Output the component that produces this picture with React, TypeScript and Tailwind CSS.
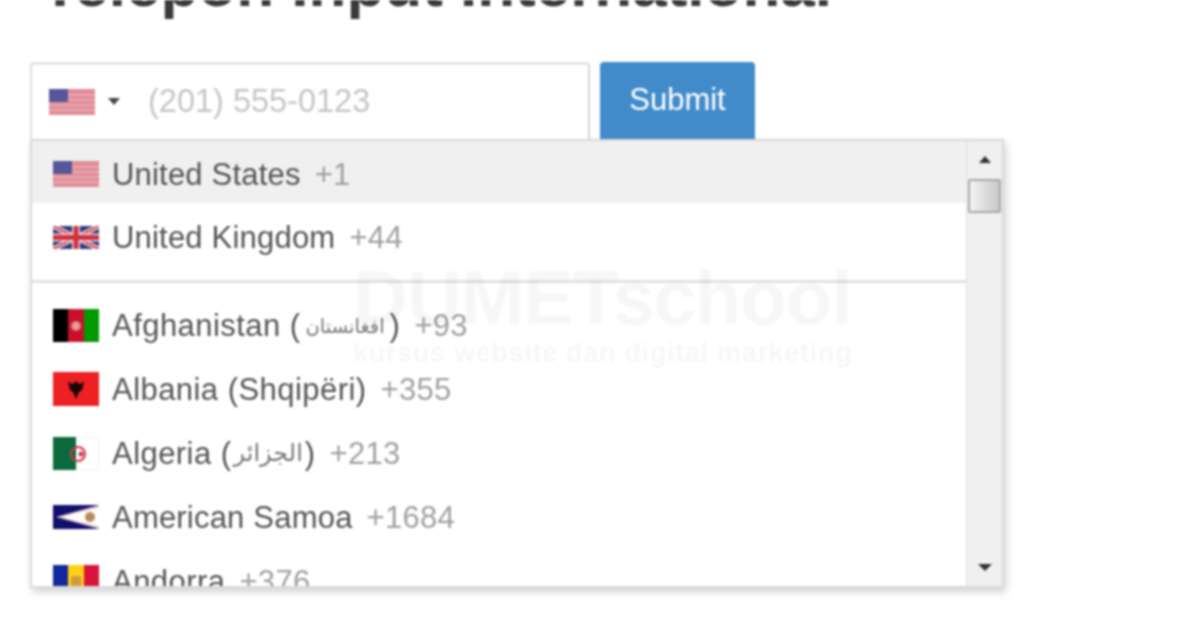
import React from "react";

const UsFlag = () => (
  <svg width="46" height="26" viewBox="0 0 46 26" className="shrink-0">
    <rect width="46" height="26" fill="#e08d97" />
    <rect y="5" width="46" height="2" fill="#e9a8af" />
    <rect y="10" width="46" height="2" fill="#e9a8af" />
    <rect y="15" width="46" height="2" fill="#e9a8af" />
    <rect y="20" width="46" height="2" fill="#e9a8af" />
    <rect width="19" height="13" fill="#56569a" />
  </svg>
);

const UkFlag = () => (
  <svg width="46" height="23" viewBox="0 0 46 23" className="shrink-0">
    <rect width="46" height="23" fill="#2d3a80" />
    <path d="M0 0L46 23M46 0L0 23" stroke="#f3d5d8" strokeWidth="5" />
    <path d="M0 0L46 23M46 0L0 23" stroke="#d0404f" strokeWidth="2" />
    <path d="M23 0V23M0 11.5H46" stroke="#f3d5d8" strokeWidth="8" />
    <path d="M23 0V23M0 11.5H46" stroke="#d0303f" strokeWidth="5" />
  </svg>
);

const AfFlag = () => (
  <svg width="46" height="33" viewBox="0 0 46 33" className="shrink-0">
    <rect width="15" height="33" fill="#000" />
    <rect x="15" width="16" height="33" fill="#c8102e" />
    <rect x="31" width="15" height="33" fill="#009a00" />
    <circle cx="23" cy="17" r="5" fill="#e08a8a" />
    <circle cx="23" cy="17" r="2" fill="#eab0b0" />
  </svg>
);

const AlFlag = () => (
  <svg width="46" height="34" viewBox="0 0 46 34" className="shrink-0">
    <rect width="46" height="34" fill="#ed2024" />
    <path d="M15 10L20 12L23 9L26 12L31 10L29 18L26 20L23 27L20 20L17 18Z" fill="#1a0505" />
  </svg>
);

const DzFlag = () => (
  <svg width="46" height="33" viewBox="0 0 46 33" className="shrink-0">
    <rect width="46" height="33" fill="#fff" stroke="#e8e8e8" />
    <rect width="23" height="33" fill="#0a6a3c" />
    <circle cx="25" cy="17" r="7" fill="none" stroke="#d2344c" strokeWidth="2" />
    <circle cx="28" cy="17" r="2.5" fill="#d2344c" />
  </svg>
);

const AsFlag = () => (
  <svg width="46" height="24" viewBox="0 0 46 24" className="shrink-0">
    <rect width="46" height="24" fill="#10106e" />
    <path d="M46 0L3 12L46 24Z" fill="#e8c4c8" />
    <path d="M46 2.5L9 12L46 21.5Z" fill="#fff" />
    <circle cx="37" cy="12" r="5" fill="#b98a58" />
  </svg>
);

const AdFlag = () => (
  <svg width="46" height="33" viewBox="0 0 46 33" className="shrink-0">
    <rect width="15" height="33" fill="#10289c" />
    <rect x="15" width="16" height="33" fill="#fcd116" />
    <rect x="31" width="15" height="33" fill="#d8143a" />
    <rect x="18" y="11" width="10" height="13" rx="2" fill="#d19a3e" />
  </svg>
);

interface Country {
  name: string;
  native?: string;
  nativeClass?: string;
  wide?: boolean;
  dial: string;
  flag: React.ReactNode;
}

const countries: Country[] = [
  { name: "Afghanistan", native: "افغانستان", nativeClass: "px-[5px] text-[19.5px]", wide: true, dial: "+93", flag: <AfFlag /> },
  { name: "Albania (Shqipëri)", wide: true, dial: "+355", flag: <AlFlag /> },
  { name: "Algeria", native: "الجزائر", nativeClass: "px-[2px] text-[24px]", wide: true, dial: "+213", flag: <DzFlag /> },
  { name: "American Samoa", dial: "+1684", flag: <AsFlag /> },
  { name: "Andorra", wide: true, dial: "+376", flag: <AdFlag /> },
];

const Row = ({ country, className }: { country: Country; className?: string }) => (
  <div className={`flex items-center shrink-0 pl-[21px] text-[31px] leading-none ${className ?? ""}`}>
    <div className="w-[46px] mr-[13px] flex justify-center">{country.flag}</div>
    <span className={`text-[#555] whitespace-nowrap ${country.wide ? "tracking-[0.45px]" : "tracking-[0.2px]"}`}>
      {country.name}
      {country.native && (
        <>
          {" ("}
          <span
            className={`inline-block -translate-y-[3px] text-[#777] tracking-normal ${country.nativeClass ?? ""}`}
            style={{ fontFamily: '"DejaVu Sans", sans-serif' }}
          >
            {country.native}
          </span>
          {")"}
        </>
      )}
    </span>
    <span className="ml-[14px] text-[#a0a0a0] tracking-[0.3px]">{country.dial}</span>
  </div>
);

export default function App() {
  return (
    <div className="relative w-[1200px] h-[630px] overflow-hidden bg-white font-['Liberation_Sans',Arial,sans-serif] blur-[0.8px]">
      <div className="px-[30px]">
        <h1 className="-mt-[50px] h-[112px] pl-[11px] text-[62px] leading-[70px] font-bold text-[#3a3a3a] whitespace-nowrap">
          Telepon Input International
        </h1>

        <div className="flex gap-[10px] h-[77px]">
          <div className="flex items-center w-[560px] bg-white border-t-[3px] border-l-2 border-r-2 border-t-[#e6e6e6] border-l-[#dedede] border-r-[#d4d4d4] rounded-t-[3px] pl-[17px] pb-[1px]">
            <UsFlag />
            <div className="ml-[13px] w-0 h-0 border-x-[6px] border-x-transparent border-t-[7px] border-t-[#444]" />
            <span className="ml-[28px] text-[32.5px] text-[#c6c6c6]">(201) 555-0123</span>
          </div>
          <button className="w-[155px] bg-[#428bca] rounded-t-[4px] text-white text-[31px]">
            Submit
          </button>
        </div>

        <div className="flex w-[974px] h-[449px] bg-white border-2 border-[#dadada] shadow-[2px_4px_8px_rgba(0,0,0,0.18)]">
          <div className="flex-1 flex flex-col overflow-hidden">
            <Row country={{ name: "United States", dial: "+1", flag: <UsFlag /> }} className="h-[62px] bg-[#f0f0f0] pt-[4px]" />
            <Row country={{ name: "United Kingdom", dial: "+44", flag: <UkFlag /> }} className="h-[66px] pt-[2px]" />
            <div className="h-[3px] mt-[11px] mb-[10px] shrink-0 bg-[#e2e2e2]" />
            {countries.map((c) => (
              <Row key={c.name} country={c} className="h-[64px]" />
            ))}
          </div>

          <div className="w-[36px] shrink-0 flex flex-col items-center bg-[#f0f0f0] border-l border-[#e0e0e0]">
            <div className="mt-[15px] w-0 h-0 border-x-[6px] border-x-transparent border-b-[7px] border-b-[#333]" />
            <div className="mt-[16px] w-[33px] h-[34px] rounded-[2px] border-2 border-[#a8a8a8] bg-gradient-to-r from-[#f4f4f4] to-[#c8c8c8]" />
            <div className="mt-auto mb-[15px] w-0 h-0 border-x-[7px] border-x-transparent border-t-[7px] border-t-[#333]" />
          </div>
        </div>
      </div>

      {/* watermark */}
      <div className="absolute left-[353px] top-[258px] pointer-events-none text-[#000]/[0.03] font-bold whitespace-nowrap">
        <div className="text-[76px] leading-[80px] tracking-[-1px]">DUMETschool</div>
        <div className="text-[27px] leading-[30px] tracking-[0.7px]">kursus website dan digital marketing</div>
      </div>
    </div>
  );
}
